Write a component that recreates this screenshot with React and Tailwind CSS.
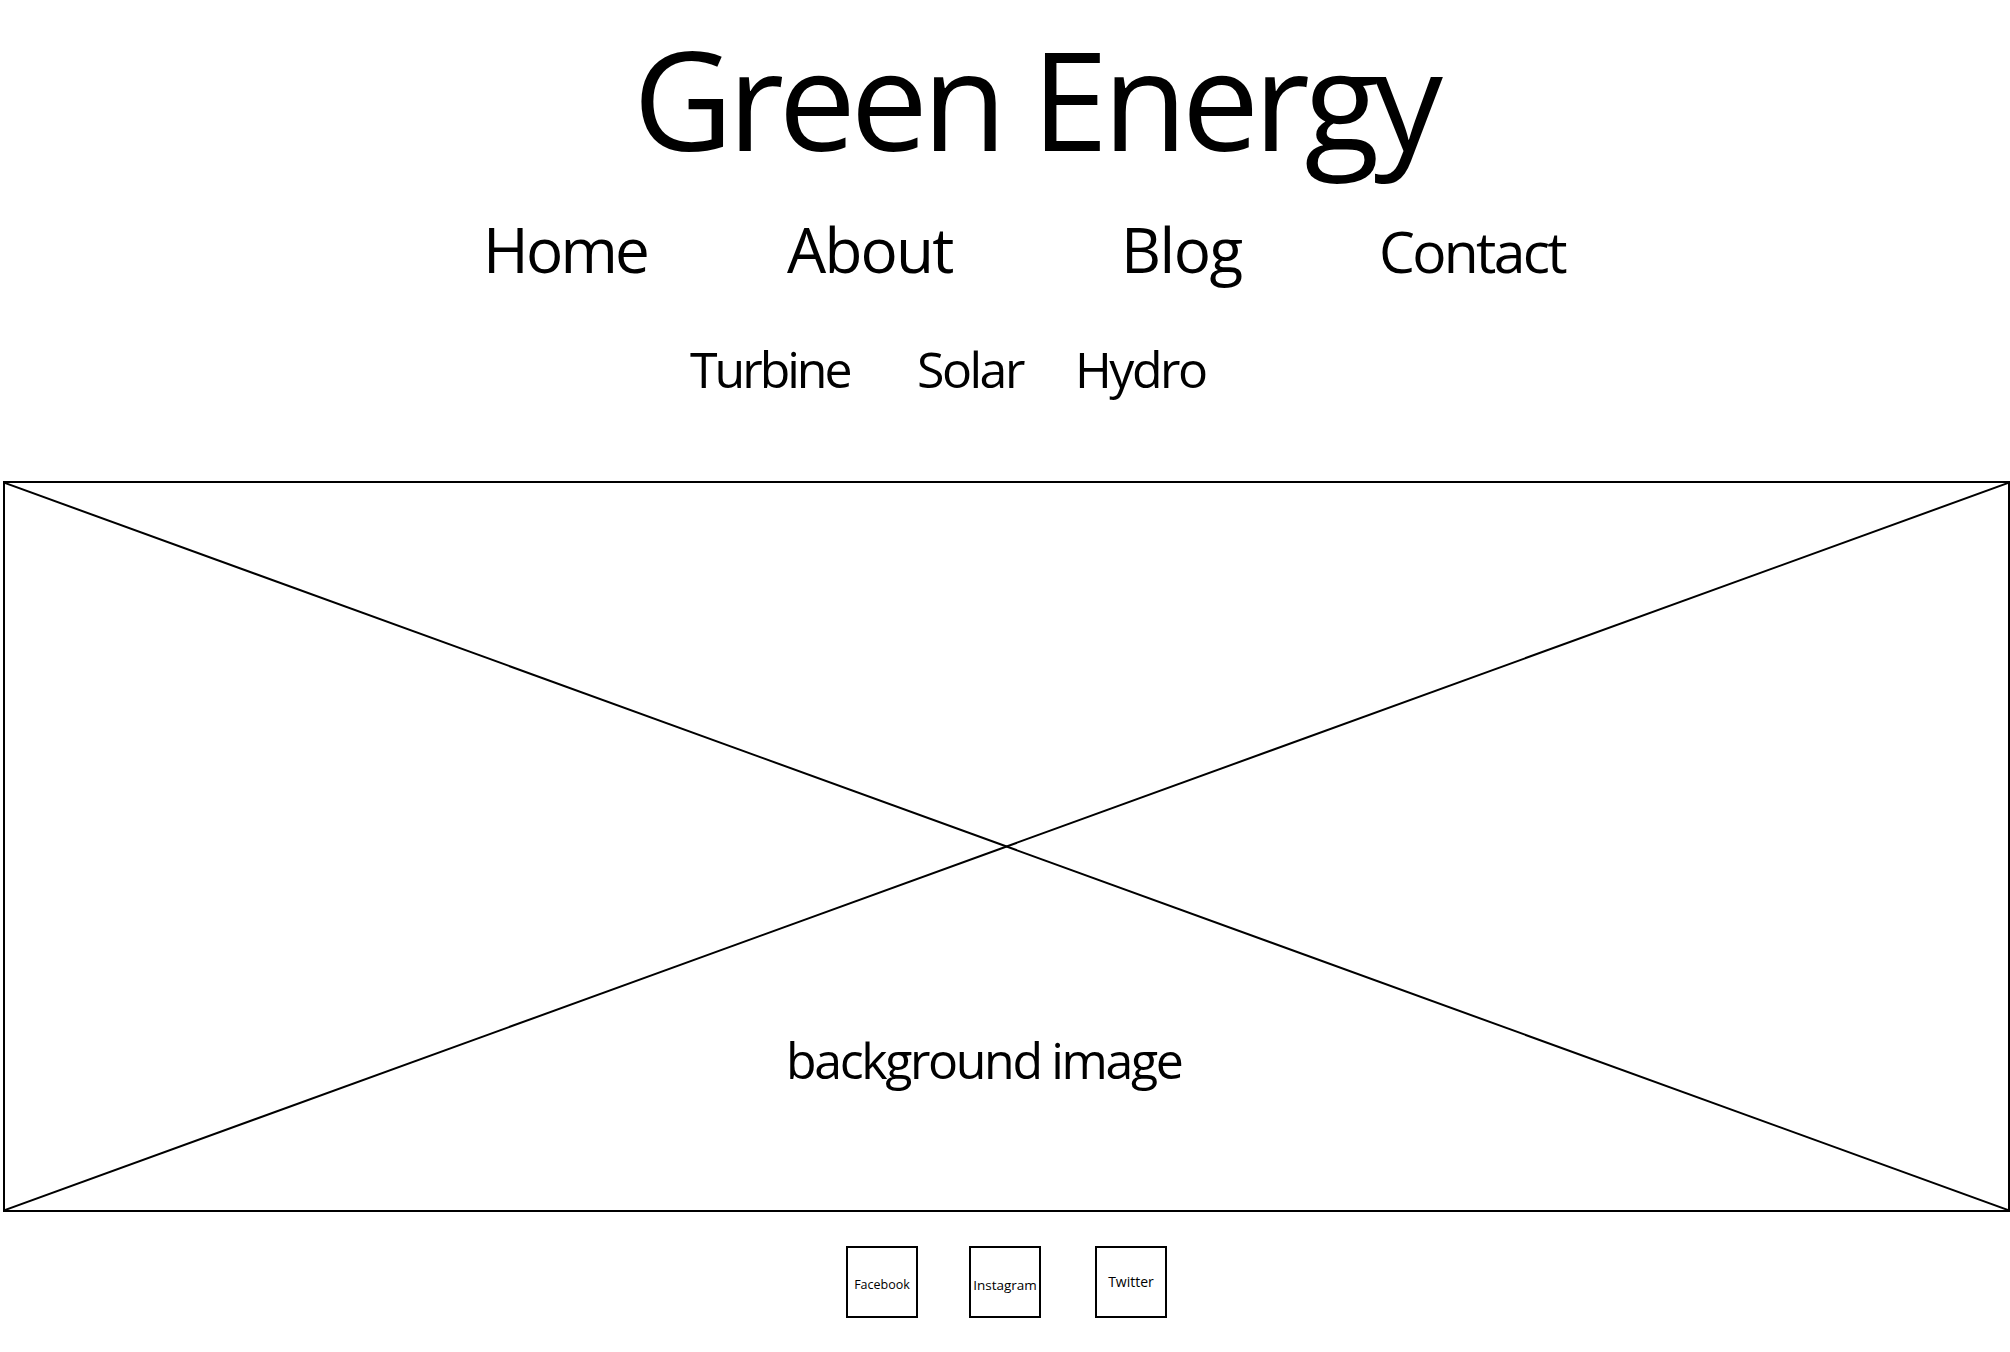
import React from 'react'

const font = { fontFamily: '"Open Sans", "Noto Sans", sans-serif' }

const NavLink = ({ label, className }) => (
  <a href="#" className={`block text-black leading-none ${className}`}>
    {label}
  </a>
)

const SocialBox = ({ label, className }) => (
  <a
    href="#"
    className={`flex h-[72px] w-[72px] items-center justify-center border-2 border-black text-black leading-none ${className}`}
  >
    {label}
  </a>
)

const App = () => {
  return (
    <div className="min-h-[1352px] w-[2010px] bg-white text-black" style={font}>
      {/* site title */}
      <header className="pl-[633px] pt-[28px]">
        <h1 className="text-[138px] font-normal leading-none tracking-[-5.6px]">Green Energy</h1>
      </header>

      {/* main navigation */}
      <nav className="mt-[52px] flex items-baseline pl-[483px]">
        <NavLink label="Home" className="w-[304px] text-[62px] tracking-[-2.8px]" />
        <NavLink label="About" className="w-[334px] text-[62px] tracking-[-1.8px]" />
        <NavLink label="Blog" className="w-[258px] text-[62px] tracking-[-1.5px]" />
        <NavLink label="Contact" className="text-[57px] tracking-[-2.7px]" />
      </nav>

      {/* sub navigation */}
      <nav className="mt-[64px] flex items-baseline pl-[690px] text-[50px] leading-none">
        <a href="#" className="block w-[227px] tracking-[-3px]">Turbine</a>
        <a href="#" className="block w-[158px] tracking-[-2.5px]">Solar</a>
        <a href="#" className="block tracking-[-2.5px]">Hydro</a>
      </nav>

      {/* hero placeholder */}
      <section className="relative ml-[3px] mt-[87px] h-[731px] w-[2007px] border-2 border-black">
        <svg
          className="absolute inset-0 h-full w-full"
          viewBox="0 0 100 100"
          preserveAspectRatio="none"
        >
          <line x1="0" y1="0" x2="100" y2="100" stroke="#000" strokeWidth="2" vectorEffect="non-scaling-stroke" />
          <line x1="100" y1="0" x2="0" y2="100" stroke="#000" strokeWidth="2" vectorEffect="non-scaling-stroke" />
        </svg>
        <p className="relative pl-[781px] pt-[552px] text-[50px] leading-none tracking-[-2.35px]">
          background image
        </p>
      </section>

      {/* social links */}
      <footer className="mt-[34px] flex pl-[846px] pb-[34px]">
        <SocialBox label="Facebook" className="pt-[6px] text-[12.5px]" />
        <SocialBox label="Instagram" className="ml-[51px] pt-[8px] text-[13.5px]" />
        <SocialBox label="Twitter" className="ml-[54px] text-[14px]" />
      </footer>
    </div>
  )
}

export default App
